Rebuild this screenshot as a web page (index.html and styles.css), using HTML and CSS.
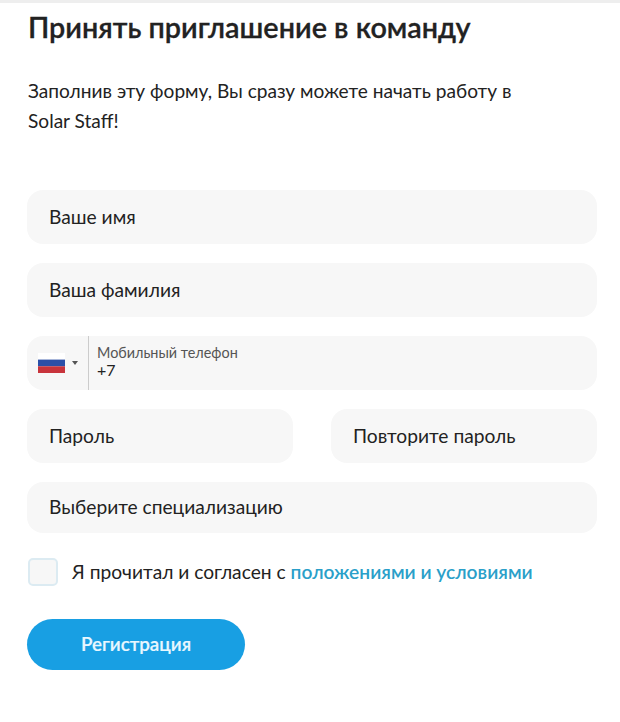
FILE: index.html
```html
<!DOCTYPE html>
<html lang="ru">
<head>
  <meta charset="UTF-8">
  <title>Solar Staff</title>
  <link rel="stylesheet" href="styles.css">
</head>
<body>
  <div class="top-line"></div>
  <main class="page">
    <h1>Принять приглашение в команду</h1>
    <p class="intro">Заполнив эту форму, Вы сразу можете начать работу в<br>Solar Staff!</p>

    <form class="form">
      <div class="field">Ваше имя</div>
      <div class="field">Ваша фамилия</div>

      <div class="field phone">
        <div class="country">
          <svg class="flag" width="27" height="20" viewBox="0 0 27 20">
            <rect width="27" height="6.6" fill="#fff"/>
            <rect y="6.6" width="27" height="6.7" fill="#2b4fa8"/>
            <rect y="13.3" width="27" height="6.7" fill="#c8343c"/>
          </svg>
          <span class="caret"></span>
        </div>
        <div class="phone-input">
          <span class="phone-label">Мобильный телефон</span>
          <span class="phone-value">+7</span>
        </div>
      </div>

      <div class="row">
        <div class="field">Пароль</div>
        <div class="field">Повторите пароль</div>
      </div>

      <div class="field select">Выберите специализацию</div>

      <label class="agree">
        <span class="checkbox"></span>
        <span>Я прочитал и согласен с <a href="#">положениями и условиями</a></span>
      </label>

      <button type="button" class="submit">Регистрация</button>
    </form>
  </main>
</body>
</html>
```

FILE: styles.css
```css
body {
  margin: 0;
  font-family: 'Lato', 'Noto Sans', sans-serif;
  background-color: #fff;
  color: #222;
}

.top-line {
  height: 3px;
  background-color: #eee;
}

.page {
  padding: 6px 23px 0 27px;
}

h1 {
  margin: 0 0 0 1px;
  font-size: 28.8px;
  line-height: 36px;
  font-weight: 600;
  -webkit-text-stroke: 0.3px #222;
  color: #222;
}

.intro {
  margin: 31px 0 0 1px;
  font-size: 19.1px;
  line-height: 30px;
}

.form {
  margin-top: 54px;
}

.field {
  height: 54px;
  margin-bottom: 19px;
  padding-left: 22px;
  background-color: #f7f7f7;
  border-radius: 16px;
  font-size: 19.2px;
  line-height: 53px;
}

.phone {
  display: flex;
  padding-left: 0;
}

.country {
  width: 62px;
  display: flex;
  align-items: center;
  padding-left: 11px;
  box-sizing: border-box;
  border-right: 1px solid #ccc;
}

.caret {
  margin-left: 7px;
  border-left: 3.5px solid transparent;
  border-right: 3.5px solid transparent;
  border-top: 4px solid #555;
}

.phone-input {
  display: flex;
  flex-direction: column;
  padding: 8px 0 0 8px;
}

.phone-label {
  font-size: 14.4px;
  line-height: 17px;
  color: #555;
}

.phone-value {
  font-size: 16px;
  line-height: 18px;
}

.row {
  display: grid;
  grid-template-columns: 266px 266px;
  justify-content: space-between;
}

.select {
  height: 51px;
  line-height: 50px;
}

.agree {
  display: flex;
  align-items: center;
  gap: 14px;
  margin: 25px 0 0 1px;
  font-size: 19.2px;
  line-height: 24px;
}

.checkbox {
  width: 26px;
  height: 24px;
  background-color: #f7f7f7;
  border: 2px solid #dcebf2;
  border-radius: 5px;
}

.agree a {
  color: #2a9fc9;
  font-weight: 600;
  text-decoration: none;
}

.submit {
  display: block;
  width: 218px;
  height: 51px;
  margin-top: 33px;
  padding: 0 0 3px;
  background-color: #189fe3;
  border: none;
  border-radius: 26px;
  color: #e8f7ff;
  font-family: inherit;
  font-size: 18.8px;
  font-weight: 600;
  -webkit-text-stroke: 0.2px #e8f7ff;
}
```
